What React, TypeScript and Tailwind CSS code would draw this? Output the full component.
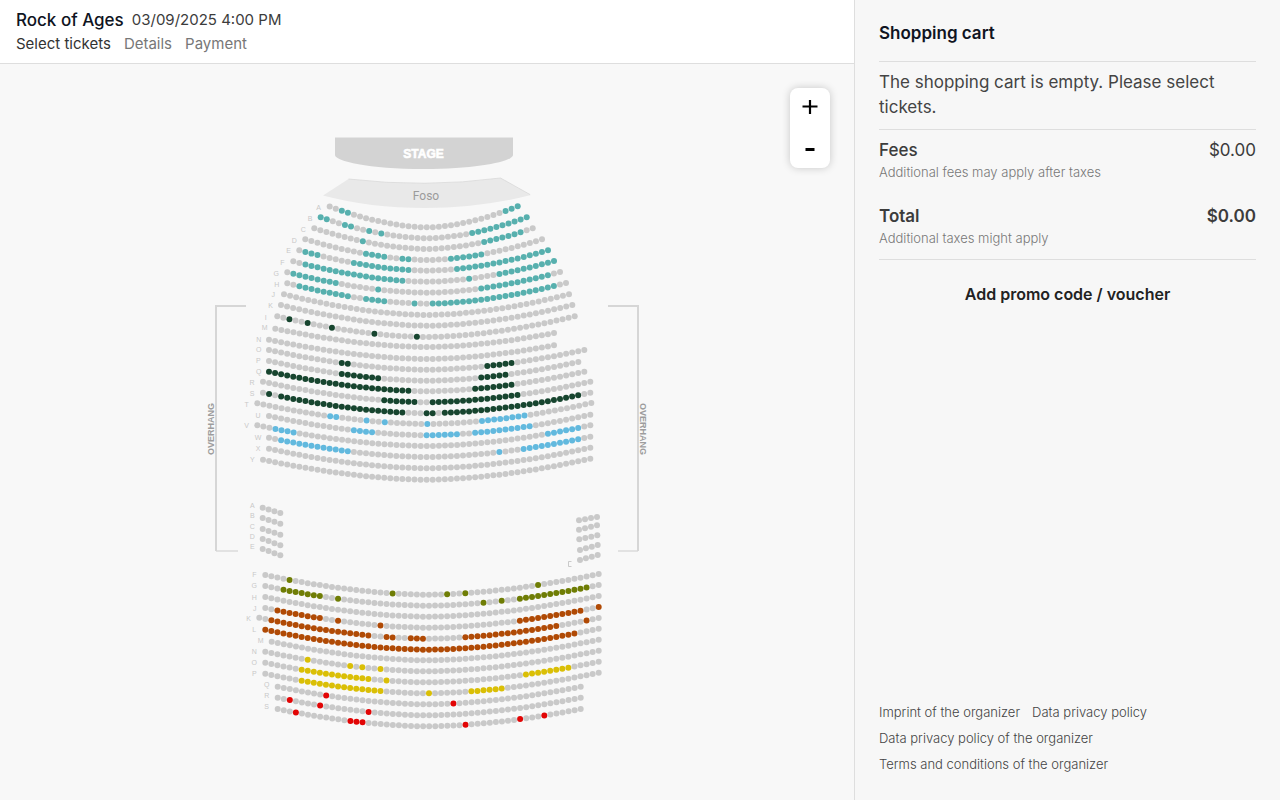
import { useState } from "react";

type Row = {
  label: string;
  labelX: number;
  labelY: number;
  start: [number, number];
  end: [number, number];
  low: number;
  count: number;
  color?: string;
  open?: [number, number][];
};

const TEAL = "#57b0ae";
const GREEN = "#17452f";
const BLUE = "#62b9de";
const OLIVE = "#6f7d05";
const RUST = "#b04a05";
const GOLD = "#dabf06";
const RED = "#e20505";
const TAKEN = "#c9c9c9";
const CENTER = 427;

const row = (
  label: string,
  labelX: number,
  labelY: number,
  start: [number, number],
  end: [number, number],
  low: number,
  count: number,
  color?: string,
  open?: [number, number][],
): Row => ({ label, labelX, labelY, start, end, low, count, color, open });

const rows: Row[] = [
  row("A", 318.7, 207.7, [329.7, 206.5], [517.7, 206.3], 227.3, 32, TEAL, [[2, 3], [29, 31]]),
  row("B", 310, 218, [320.7, 217.3], [526.7, 217.3], 238.2, 35, TEAL, [[0, 1], [4, 5], [8, 8], [10, 10], [25, 34]]),
  row("C", 303.3, 229, [314.3, 228.3], [532.7, 228.3], 249, 37, TEAL, [[8, 8], [28, 34]]),
  row("D", 294.3, 240, [305.3, 239.3], [542, 239.3], 260, 40, TEAL, [[10, 13], [16, 17], [24, 29]]),
  row("E", 288.7, 250.7, [299.3, 250.3], [548, 250.3], 270.7, 42, TEAL, [[1, 3], [9, 18], [26, 41]]),
  row("F", 282.3, 262, [293.3, 261.3], [554, 261], 281.7, 44, TEAL, [[2, 18], [29, 29], [34, 43]]),
  row("G", 276.3, 273, [287.3, 272.3], [560, 272], 292.7, 46, TEAL, [[1, 8], [15, 15], [32, 43]]),
  row("H", 276.7, 284, [287.3, 283.3], [566, 283], 303.7, 47, TEAL, [[2, 10], [13, 16], [21, 21], [24, 44]]),
  row("J", 273.3, 294.7, [284, 294.3], [569, 294.3], 315, 48),
  row("K", 270.7, 305.7, [281, 305], [572.3, 305], 325.7, 49),
  row("I", 265.7, 317, [277.3, 316.3], [574.7, 316.3], 337, 50, GREEN, [[2, 2], [5, 5], [9, 9], [16, 16], [23, 23]]),
  row("M", 264.7, 327, [275.3, 328.7], [554, 333], 347, 47),
  row("N", 258.7, 339.3, [269, 339.7], [554, 345.3], 359, 48),
  row("O", 258.7, 349.7, [269, 350], [584.3, 350], 369.7, 53, GREEN, [[12, 13], [36, 40]]),
  row("P", 258.3, 360.7, [269, 361], [578.3, 362], 380.7, 52, GREEN, [[12, 18], [35, 39]]),
  row("Q", 258.7, 371.3, [269, 371.7], [584.3, 371.7], 391.3, 53, GREEN, [[0, 23], [34, 40]]),
  row("R", 252, 382.7, [263, 381.7], [590.3, 381.7], 402.3, 55, GREEN, [[20, 25], [28, 42]]),
  row("S", 252, 393, [263, 392.7], [590.3, 392.7], 413.3, 55, GREEN, [[1, 1], [3, 23], [27, 28], [30, 52]]),
  row("T", 246.7, 404.3, [257.3, 403.3], [591.3, 403], 424, 56, BLUE, [[12, 13], [18, 18], [21, 21], [28, 28], [37, 44]]),
  row("U", 258, 415.7, [269, 416], [590.3, 414.7], 435.3, 54, BLUE, [[14, 17], [26, 31], [34, 43]]),
  row("V", 246.7, 425.7, [257.3, 425.3], [590.3, 425.3], 446, 56, BLUE, [[3, 6], [48, 53]]),
  row("W", 258, 437.3, [269, 437.7], [590.3, 436.7], 457, 54, BLUE, [[2, 13], [38, 38], [42, 51]]),
  row("X", 258, 448.3, [269, 448.7], [590.3, 447.7], 468.3, 54),
  row("Y", 252.3, 459.3, [263, 459.7], [590.3, 458.7], 479.7, 55),
  row("F", 254.3, 574.7, [265.3, 575], [598.7, 574], 594.7, 56, OLIVE, [[4, 4], [21, 21], [30, 30], [33, 33], [45, 45]]),
  row("G", 254.3, 585.3, [265.3, 586], [598.7, 585], 605.7, 56, OLIVE, [[3, 9], [12, 12], [36, 36], [39, 39], [42, 53]]),
  row("H", 254.3, 597, [265.3, 597], [598.7, 596], 616.7, 56),
  row("J", 254.7, 608, [265.3, 608], [598.7, 607], 627.7, 56, RUST, [[2, 9], [12, 12], [19, 19], [42, 52], [55, 55]]),
  row("K", 248.7, 618.3, [259.3, 617.8], [598.7, 618], 638.7, 57, RUST, [[2, 18], [21, 22], [25, 27], [34, 49], [54, 54]]),
  row("L", 254.3, 629.7, [265.3, 629.7], [598.7, 628.7], 649.7, 56, RUST, [[0, 51]]),
  row("M", 260.7, 640.7, [271.7, 641.7], [598.7, 639.7], 660.3, 55),
  row("N", 254.3, 651.3, [265.3, 651.7], [598.7, 650.7], 671.3, 56, GOLD, [[7, 7], [14, 14], [16, 16], [19, 19]]),
  row("O", 254.3, 662.3, [265.3, 662.7], [598.7, 661.7], 682.3, 56, GOLD, [[6, 17], [20, 20], [43, 50]]),
  row("P", 254.3, 673.3, [265.3, 673.7], [598.7, 672.7], 693.3, 56, GOLD, [[6, 19], [27, 27], [34, 39]]),
  row("Q", 266.7, 684.3, [277.7, 686.7], [580.7, 686.7], 704.3, 51, RED, [[8, 8], [29, 29]]),
  row("R", 266.7, 695.3, [277.7, 697.7], [580.7, 697.7], 715.3, 51, RED, [[2, 2], [7, 7], [15, 15]]),
  row("S", 266.7, 706.3, [277.7, 709], [580.7, 709], 726.3, 51, RED, [[3, 3], [12, 14], [31, 31], [40, 40], [44, 44]]),
];

type Box = { label?: string; labelY?: number; start: [number, number]; end: [number, number] };

const boxes: Box[] = [
  { label: "A", labelY: 505.3, start: [262.7, 507.7], end: [280.3, 513] },
  { label: "B", labelY: 515.3, start: [262.7, 518], end: [280.3, 523.7] },
  { label: "C", labelY: 526.3, start: [262.7, 529], end: [280.3, 534.7] },
  { label: "D", labelY: 536.3, start: [262.7, 539], end: [280.3, 545.3] },
  { label: "E", labelY: 546.3, start: [262.7, 549], end: [280.3, 555.3] },
  { start: [579, 520.3], end: [597, 517] },
  { start: [579, 529.7], end: [597, 525.3] },
  { start: [579.3, 539.3], end: [597.3, 535.3] },
  { start: [580, 550], end: [597.7, 545] },
  { start: [580, 560], end: [597.7, 555] },
];

function seatY(r: Row, x: number) {
  const [ex, ey] = x < CENTER ? r.start : r.end;
  const t = Math.abs(x - CENTER) / Math.abs(ex - CENTER);
  return r.low - (r.low - ey) * Math.pow(t, 1.75);
}

function SeatRow({ r }: { r: Row }) {
  const step = (r.end[0] - r.start[0]) / (r.count - 1);
  return (
    <g>
      <text x={r.labelX} y={r.labelY + 2.5} textAnchor="middle" className="fill-[#c8c8c8] text-[7px]">
        {r.label}
      </text>
      {Array.from({ length: r.count }, (_, i) => {
        const x = r.start[0] + i * step;
        const free = r.open?.some(([a, b]) => i >= a && i <= b);
        return <circle key={i} cx={x} cy={seatY(r, x)} r={3} fill={free ? r.color : TAKEN} />;
      })}
    </g>
  );
}

function BoxRow({ b }: { b: Box }) {
  return (
    <g>
      {b.label && (
        <text x={252.3} y={(b.labelY ?? 0) + 2.5} textAnchor="middle" className="fill-[#c8c8c8] text-[7px]">
          {b.label}
        </text>
      )}
      {[0, 1, 2, 3].map((i) => (
        <circle
          key={i}
          cx={b.start[0] + ((b.end[0] - b.start[0]) * i) / 3}
          cy={b.start[1] + ((b.end[1] - b.start[1]) * i) / 3}
          r={3}
          fill={TAKEN}
        />
      ))}
    </g>
  );
}

function SeatMap({ scale }: { scale: number }) {
  const w = 854 / scale;
  const h = 736 / scale;
  const viewBox = `${427 - w / 2} ${432 - h / 2} ${w} ${h}`;
  return (
    <svg viewBox={viewBox} role="img" aria-label="Seat map" className="block h-full w-full font-['Liberation_Sans',sans-serif]">
      <path d="M335 137.5H513V155C513 161 480 169 424 169S335 161 335 155Z" fill="#d3d3d3" />
      <text x="423.5" y="157.5" textAnchor="middle" className="fill-white text-[12px] font-bold" stroke="white" strokeWidth="0.6">STAGE</text>
      <path d="M348.500 179Q425 188 500.500 178L531 195Q480 208 425 208T323 195.500Z" fill="#e9e9e9" />
      <path d="M348.500 179Q425 188 500.500 178L530 194.500" fill="none" stroke="#d6d6d6" strokeWidth="0.7" />
      <text x="426" y="200" textAnchor="middle" className="fill-[#9b9b9b] font-['Roboto',sans-serif] text-[12px]">Foso</text>
      <g fill="none" stroke="#d6d6d6">
        <path d="M246 306H216V551" strokeWidth="2" />
        <path d="M216 551H238" strokeWidth="1.3" />
        <path d="M608 306H638V551" strokeWidth="2" />
        <path d="M638 551H618" strokeWidth="1.3" />
        <path d="M571.500 561.500H568.500V566.500H571.500" stroke="#c4c4c4" strokeWidth="0.9" />
      </g>
      <text transform="translate(214 429) rotate(-90)" textAnchor="middle" className="fill-[#9d9d9d] text-[9px] font-bold">OVERHANG</text>
      <text transform="translate(640 429) rotate(90)" textAnchor="middle" className="fill-[#9d9d9d] text-[9px] font-bold">OVERHANG</text>
      {rows.map((r, i) => <SeatRow key={i} r={r} />)}
      {boxes.map((b, i) => <BoxRow key={i} b={b} />)}
    </svg>
  );
}

export default function App() {
  const [scale, setScale] = useState(1);
  return (
    <div className="flex h-screen bg-[#f8f8f8] font-[Inter,sans-serif] text-[#3c3c3c]">
      <main className="flex min-w-0 flex-1 flex-col">
        <header className="border-b border-[#dedede] bg-white px-4 pt-2 pb-[7px]">
          <div className="flex items-center gap-2 leading-6">
            <h1 className="text-[17px] font-medium text-[#0f1422]">Rock of Ages</h1>
            <time className="text-[15px]">03/09/2025 4:00 PM</time>
          </div>
          <nav className="flex gap-[13px] text-[15px] leading-6 text-[#777]">
            <a href="#tickets" className="text-[#333]">Select tickets</a>
            <a href="#details">Details</a>
            <a href="#payment">Payment</a>
          </nav>
        </header>
        <section className="relative min-h-0 flex-1">
          <SeatMap scale={scale} />
          <div className="absolute top-6 right-6 flex w-10 flex-col overflow-hidden rounded-lg bg-white text-black shadow-[0_0_8px_rgba(0,0,0,0.2)]">
            <button type="button" aria-label="Zoom in" onClick={() => setScale(Math.min(4, scale * 1.25))} className="flex h-10 items-center justify-center">
              <svg width="16" height="16" viewBox="0 0 16 16" stroke="currentColor" strokeWidth="2.200" aria-hidden="true"><path d="M0.500 6.500H15.500M8 -1V14" /></svg>
            </button>
            <button type="button" aria-label="Zoom out" onClick={() => setScale(Math.max(1, scale / 1.25))} className="flex h-10 items-center justify-center">
              <svg width="16" height="16" viewBox="0 0 16 16" stroke="currentColor" strokeWidth="3" aria-hidden="true"><path d="M3.500 9.500H12.500" /></svg>
            </button>
          </div>
        </section>
      </main>
      <aside className="flex w-[426px] shrink-0 flex-col border-l border-[#dedede] bg-[#f7f7f7] px-6 pt-5 pb-[23px]">
        <h2 className="border-b border-[#dedede] pb-[15px] text-[17px] leading-[26px] font-semibold text-[#0f1422]">Shopping cart</h2>
        <p className="border-b border-[#dedede] pt-2 pb-[9px] text-[17px] leading-[25px] text-[#444]">
          The shopping cart is empty. Please select tickets.
        </p>
        <dl className="border-b border-[#dedede] pt-2 pb-3">
          <div className="mb-[23px]">
            <div className="flex justify-between text-[17px] leading-[25px]">
              <dt className="font-medium">Fees</dt>
              <dd>$0.00</dd>
            </div>
            <dd className="text-[13px] leading-[18px] font-light text-[#777]">Additional fees may apply after taxes</dd>
          </div>
          <div>
            <div className="flex justify-between text-[17px] leading-[25px] font-semibold">
              <dt>Total</dt>
              <dd>$0.00</dd>
            </div>
            <dd className="text-[13px] leading-[18px] font-light text-[#777]">Additional taxes might apply</dd>
          </div>
        </dl>
        <button type="button" className="mt-[22px] self-center text-base leading-6 font-semibold text-[#222]">
          Add promo code / voucher
        </button>
        <footer className="mt-auto flex flex-wrap gap-x-3 text-[13px] leading-[26px] font-light text-[#444]">
          <a href="#imprint">Imprint of the organizer</a>
          <a href="#privacy">Data privacy policy</a>
          <a href="#organizer-privacy" className="w-full">Data privacy policy of the organizer</a>
          <a href="#terms" className="w-full">Terms and conditions of the organizer</a>
        </footer>
      </aside>
    </div>
  );
}
